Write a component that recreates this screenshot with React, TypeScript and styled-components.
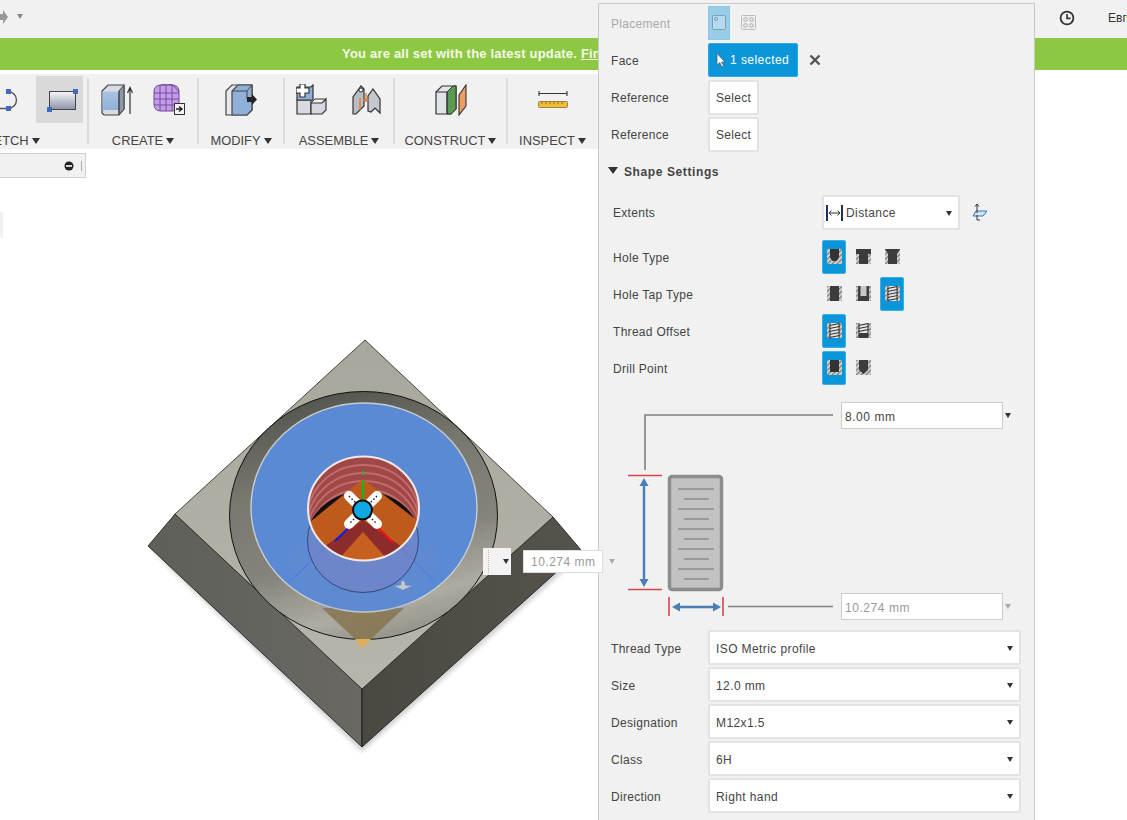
import { useId } from 'react';
import styled, { createGlobalStyle } from 'styled-components';

const GlobalStyle = createGlobalStyle`
	html, body {
		margin: 0;
		padding: 0;
		background: #fff;
		font-family: 'Liberation Sans', Arial, sans-serif;
		font-size: 12px;
		color: #444;
	}
	* {
		box-sizing: border-box;
	}
`;

type HoleVariant =
	| 'simple'
	| 'counterbore'
	| 'countersink'
	| 'plain'
	| 'clearance'
	| 'tapped'
	| 'threadFull'
	| 'threadPartial'
	| 'flat'
	| 'angled';

const HoleIcon = ({ variant }: { variant: HoleVariant }) => {
	const id = useId();
	const threaded = variant === 'tapped' || variant === 'threadFull' || variant === 'threadPartial';
	return (
		<svg width="15" height="15" viewBox="0 0 15 15">
			<defs>
				<pattern id={id} width="3.4" height="3.4" patternUnits="userSpaceOnUse" patternTransform="rotate(45)">
					<rect width="3.4" height="3.4" fill="#d2d2d2" />
					<rect width="1.2" height="3.4" fill="#7c7c7c" />
				</pattern>
			</defs>
			<rect width="15" height="15" fill={`url(#${id})`} />
			{variant === 'simple' && <path d="M3 0H12V8.5L9.5 12H5.5L3 8.5Z" fill="#333" />}
			{variant === 'counterbore' && <path d="M0 0H15V5H12V15H3V5H0Z" fill="#3c3c3c" />}
			{variant === 'countersink' && <path d="M0 0H15L12 5V15H3V5Z" fill="#3c3c3c" />}
			{variant === 'plain' && <rect x="3" width="9" height="15" fill="#3c3c3c" />}
			{variant === 'clearance' && (
				<>
					<rect x="2" width="11" height="15" fill="#3c3c3c" />
					<rect x="4.5" width="6" height="10" fill="#c6c6c6" />
				</>
			)}
			{threaded && (
				<>
					<rect x="3" width="9" height={variant === 'threadPartial' ? 10 : 15} fill="#e8e8e8" />
					{variant === 'threadPartial' && <rect x="3" y="10" width="9" height="5" fill="#3c3c3c" />}
					{[1, 4, 7, 10, 13].slice(0, variant === 'threadPartial' ? 3 : 5).map((y) => (
						<path key={y} d={`M2.5 ${y + 1.5}L12.5 ${y - 0.5}`} stroke="#333" strokeWidth="1.2" />
					))}
					<path d="M3 0V15M12 0V15" stroke="#333" />
				</>
			)}
			{variant === 'flat' && <path d="M3 0H12V12H3Z" fill="#333" />}
			{variant === 'angled' && <path d="M3 0H12V10L7.5 14L3 10Z" fill="#3c3c3c" />}
		</svg>
	);
};

const ArcIcon = () => (
	<svg width="24" height="24" viewBox="0 0 24 24">
		<path d="M-4 20.5H10A8.5 8.5 0 0 0 10 3.5" fill="none" stroke="#555" strokeWidth="1.4" />
		<rect x="8" y="1" width="5" height="5" fill="#3f6cc0" />
		<rect x="8" y="18" width="5" height="5" fill="#3f6cc0" />
	</svg>
);

const RectIcon = () => (
	<svg width="32" height="24" viewBox="0 0 32 24">
		<defs>
			<linearGradient id="sketchFace" x1="0" y1="0" x2="0" y2="1">
				<stop offset="0" stopColor="#f6f7fa" />
				<stop offset="1" stopColor="#8d93a6" />
			</linearGradient>
		</defs>
		<rect x="3.5" y="3.5" width="26" height="18" fill="url(#sketchFace)" stroke="#444" />
		<rect x="27" y="1" width="5" height="5" fill="#3f6cc0" />
		<rect x="1" y="19" width="5" height="5" fill="#3f6cc0" />
	</svg>
);

const ExtrudeIcon = () => (
	<svg width="32" height="32" viewBox="0 0 32 32">
		<defs>
			<linearGradient id="extrudeFace" x1="0" y1="0" x2="0" y2="1">
				<stop offset="0" stopColor="#aac4e4" />
				<stop offset="1" stopColor="#8fb0d8" />
			</linearGradient>
		</defs>
		<path d="M1 7L7 1H23V25L18 31H3L1 29Z" fill="#d7dbe2" stroke="#444" strokeWidth="1.2" />
		<path d="M1.5 7.5H18V26H1.5Z" fill="url(#extrudeFace)" />
		<path d="M18 7L23 1V25L18 31Z" fill="#8b98a8" stroke="#444" />
		<path d="M18 7V31" stroke="#444" />
		<path d="M29 30V5M26.5 9L29 3.5L31.5 9" fill="none" stroke="#333" strokeWidth="1.2" />
	</svg>
);

const FormIcon = () => (
	<svg width="32" height="32" viewBox="0 0 32 32">
		<path d="M1 8Q1 1 8 1H19Q26 1 26 8V20Q26 27 19 27H8Q1 27 1 20Z" fill="#c79be8" stroke="#6a4a96" />
		<path d="M1 9H26M1 15H26M1 21H26M7 1V27M13 1V27M19 1V27" stroke="#6a4a96" strokeWidth="0.9" />
		<path d="M8 1Q14 -1 20 1L26 8" fill="none" stroke="#6a4a96" />
		<rect x="21.5" y="19.5" width="10" height="11" fill="#f4f4f4" stroke="#333" />
		<path d="M23 25H28M26 22.5L29 25L26 27.5" fill="none" stroke="#222" strokeWidth="1.4" />
	</svg>
);

const ModifyIcon = () => (
	<svg width="32" height="32" viewBox="0 0 32 32">
		<path d="M1 7L7 1H27V26L22 31H1Z" fill="#e6e9ee" stroke="#444" strokeWidth="1.2" />
		<path d="M7 7L13 1H27V26L22 31H7Z" fill="#8fb0d8" stroke="#444" strokeWidth="1.2" />
		<path d="M22 7H7M22 7L27 1M22 7V15" fill="none" stroke="#444" />
		<path d="M22 13H27V10L32 15.5L27 21V18H22Z" fill="#222" />
	</svg>
);

const AssembleIcon = () => (
	<svg width="32" height="32" viewBox="0 0 32 32">
		<path d="M1 30V16H15V30Z" fill="#d8dce2" stroke="#333" strokeWidth="1.2" />
		<path d="M15 30V19H26L30 15V26L26 30Z" fill="#d5d9df" stroke="#333" strokeWidth="1.2" />
		<path d="M15 19L19 15H30" fill="none" stroke="#333" />
		<path d="M1 16V3H15L17 1V16H1Z" fill="#8fb0d8" stroke="#333" strokeWidth="1.2" />
		<path d="M4 0H9V4H13V9H9V13H4V9H0V4H4Z" fill="#fff" stroke="#333" strokeWidth="1.2" />
	</svg>
);

const JointIcon = () => (
	<svg width="32" height="32" viewBox="0 0 32 32">
		<path d="M3 30V13L11 2L14 5V22L6 30Z" fill="#b9bec6" stroke="#333" strokeWidth="1.2" />
		<path d="M18 27V12L23 5L30 15V29L25 24L21 28Z" fill="#c3c8cf" stroke="#333" strokeWidth="1.2" />
		<circle cx="11" cy="6" r="2" fill="#fff" stroke="#333" />
		<path d="M10 26V14M16 18V9M13 16H19" stroke="#e07b2a" strokeWidth="1.3" fill="none" />
	</svg>
);

const ConstructIcon = () => (
	<svg width="32" height="32" viewBox="0 0 32 32">
		<path d="M1 8L7 2H21V25L16 30H1Z" fill="#e0e3e8" stroke="#333" strokeWidth="1.2" />
		<path d="M12 8L18 2H21V25L16 30H12Z" fill="#5a9a52" stroke="#333" />
		<path d="M1 8H12V30" fill="none" stroke="#333" />
		<path d="M24 11L31 1V22L24 31Z" fill="#ef9c63" stroke="#333" strokeWidth="1.1" />
	</svg>
);

const InspectIcon = () => (
	<svg width="32" height="18" viewBox="0 0 32 18">
		<path d="M2 2.5H30M2 0V5M30 0V5" stroke="#333" strokeWidth="1.1" fill="none" />
		<rect x="1.5" y="10.5" width="29" height="6" rx="1" fill="#eebd3d" stroke="#a08436" />
		<path d="M5 11V13M9 11V13M13 11V13M17 11V13M21 11V13M25 11V13" stroke="#8a6d1e" />
	</svg>
);

const ModelView = () => (
	<ModelSvg viewBox="0 149 598 671" width="598" height="671">
		<defs>
			<linearGradient id="ringGrad" x1="0.4" y1="0" x2="0.7" y2="1">
				<stop offset="0" stopColor="#565651" />
				<stop offset="0.3" stopColor="#78786f" />
				<stop offset="0.62" stopColor="#85847c" />
				<stop offset="0.84" stopColor="#aeaba1" />
				<stop offset="1" stopColor="#8f8e86" />
			</linearGradient>
			<linearGradient id="topFace" x1="0" y1="0" x2="0" y2="1">
				<stop offset="0" stopColor="#a9a69b" />
				<stop offset="1" stopColor="#b8b5ac" />
			</linearGradient>
			<linearGradient id="rightFace" x1="0" y1="0" x2="1" y2="0">
				<stop offset="0" stopColor="#4a4840" />
				<stop offset="1" stopColor="#55534b" />
			</linearGradient>
			<linearGradient id="leftFace" x1="0" y1="0" x2="1" y2="0">
				<stop offset="0" stopColor="#5f5f59" />
				<stop offset="1" stopColor="#696863" />
			</linearGradient>
			<filter id="soft" x="-10%" y="-10%" width="120%" height="120%">
				<feGaussianBlur stdDeviation="2" />
			</filter>
			<clipPath id="holeClip">
				<ellipse cx="363.5" cy="508.5" rx="55.5" ry="52" />
			</clipPath>
		</defs>

		<path d="M150 550L362 752L585 552L362 700Z" fill="#000" opacity="0.18" filter="url(#soft)" />
		<path d="M148 546L175 514L362 689V747Z" fill="url(#leftFace)" stroke="#111" strokeWidth="0.8" />
		<path d="M362 747V689L553 517L581 550Z" fill="url(#rightFace)" stroke="#111" strokeWidth="0.8" />
		<path d="M365 340L553 517L362 689L175 514Z" fill="url(#topFace)" stroke="#222" strokeWidth="0.8" />

		<ellipse cx="363.5" cy="515.5" rx="134" ry="124" fill="url(#ringGrad)" stroke="#111" strokeWidth="1" />
		<path d="M322 608H404L371 639H355Z" fill="#86744f" opacity="0.85" />
		<path d="M355 639H371L362 648Z" fill="#e4ae58" />
		<ellipse cx="364" cy="507.5" rx="113" ry="104.5" fill="#5a8ad4" stroke="#c9cdd0" strokeWidth="1.4" />

		<path d="M293 545H435V572L403 612H325L293 572Z" fill="#7c8ac0" opacity="0.13" />
		<path d="M325 548L288 583M403 550L435 582" stroke="#4c78dc" strokeWidth="1.6" strokeDasharray="9 2" opacity="0.65" />
		<ellipse cx="363" cy="540.5" rx="55.5" ry="52" fill="#8080c0" fillOpacity="0.45" stroke="#33477c" strokeWidth="1" />

		<g clipPath="url(#holeClip)">
			<rect x="300" y="450" width="130" height="120" fill="#a04848" />
			{[0, 8, 16, 24].map((d) => (
				<ellipse key={d} cx="363.5" cy={517 + d} rx="56" ry="52" fill="none" stroke="#bf6c6a" strokeWidth="1.8" />
			))}
			<ellipse cx="363.5" cy="543" rx="58" ry="52" fill="#141010" />
			<path d="M300 530L363 479L430 530V570H300Z" fill="#bd5a1c" />
			<path d="M318 551L363 520L408 551V570H318Z" fill="#8b2b2b" />
			<path d="M338 560L363 532L388 560V570H338Z" fill="#c7601f" />
		</g>
		<ellipse cx="363.5" cy="508.5" rx="55.5" ry="52" fill="none" stroke="#f3e9e4" strokeWidth="2" />

		<path d="M363 480V502" stroke="#1fb01f" strokeWidth="2.4" />
		<rect x="362" y="471" width="2.6" height="4" fill="#3aa83a" />
		<path d="M357 520L335 541" stroke="#1a1ad8" strokeWidth="2.4" />
		<path d="M370 520L393 543" stroke="#ea1010" strokeWidth="2.4" />
		<path d="M349 496L377 524M377 496L349 524" stroke="#fff" strokeWidth="10" strokeLinecap="round" />
		<path d="M349 496L377 524M377 496L349 524" stroke="#222" strokeWidth="1.4" strokeDasharray="1.6 2" />
		<circle cx="362.5" cy="510" r="9.5" fill="#10a8e2" stroke="#0a0a0a" strokeWidth="2" />

		<path d="M401 581H405V585L412 586L403 590L394 586L401 585Z" fill="#c4cbd6" stroke="#7a8aa8" strokeWidth="0.6" />
	</ModelSvg>
);

const App = () => (
	<Page>
		<GlobalStyle />
		<TopBar>
			<Nav>
				<svg width="8" height="14" viewBox="0 0 8 14">
					<path d="M0 4H3V0L8 7L3 14V10H0Z" fill="#999" />
				</svg>
				<NavCaret />
			</Nav>
			<svg width="16" height="16" viewBox="0 0 16 16">
				<circle cx="8" cy="8" r="6.4" fill="none" stroke="#333" strokeWidth="1.8" />
				<path d="M8 4V8.4H11.5" fill="none" stroke="#333" strokeWidth="1.6" />
			</svg>
			<UserName>Евгений</UserName>
		</TopBar>
		<Banner>
			<BannerText>
				You are all set with the latest update. <BannerLink>Find out what's new</BannerLink>
			</BannerText>
		</Banner>
		<Toolbar>
			<Group $width={158} $clipped>
				<IconRow $justify="flex-end" $gap={14}>
					<ArcIcon />
					<ActiveTool>
						<RectIcon />
					</ActiveTool>
				</IconRow>
				<GroupLabel>
					SKETCH <Caret $large />
				</GroupLabel>
			</Group>
			<Separator />
			<Group $width={108}>
				<IconRow $gap={20}>
					<ExtrudeIcon />
					<FormIcon />
				</IconRow>
				<GroupLabel>
					CREATE <Caret $large />
				</GroupLabel>
			</Group>
			<Separator />
			<Group $width={84}>
				<IconRow>
					<ModifyIcon />
				</IconRow>
				<GroupLabel>
					MODIFY <Caret $large />
				</GroupLabel>
			</Group>
			<Separator />
			<Group $width={108}>
				<IconRow $gap={22}>
					<AssembleIcon />
					<JointIcon />
				</IconRow>
				<GroupLabel>
					ASSEMBLE <Caret $large />
				</GroupLabel>
			</Group>
			<Separator />
			<Group $width={111}>
				<IconRow>
					<ConstructIcon />
				</IconRow>
				<GroupLabel>
					CONSTRUCT <Caret $large />
				</GroupLabel>
			</Group>
			<Separator />
			<Group $width={89}>
				<IconRow>
					<InspectIcon />
				</IconRow>
				<GroupLabel>
					INSPECT <Caret $large />
				</GroupLabel>
			</Group>
		</Toolbar>
		<Viewport>
			<ModelView />
			<BrowserBox>
				<svg width="10" height="10" viewBox="0 0 10 10">
					<circle cx="5" cy="5" r="4.5" fill="#222" />
					<rect x="2" y="4.2" width="6" height="1.6" fill="#fff" />
				</svg>
				<BrowserGrip />
			</BrowserBox>
			<SideChip />
			<DimHandle>
				<DimGrip />
				<Caret />
			</DimHandle>
		</Viewport>
		<Panel>
			<Row>
				<Label $muted>Placement</Label>
				<PlacementActive>
					<svg width="14" height="15" viewBox="0 0 14 15">
						<rect x="0.5" y="0.5" width="13" height="14" rx="1" fill="#b7d9ec" stroke="#7aa0b8" />
						<circle cx="4" cy="4" r="1.6" fill="none" stroke="#7aa0b8" />
					</svg>
				</PlacementActive>
				<PlacementIdle>
					<svg width="15" height="15" viewBox="0 0 15 15">
						<rect x="0.5" y="0.5" width="14" height="14" rx="1" fill="#eee" stroke="#bbb" />
						<circle cx="4.5" cy="4.5" r="1.8" fill="none" stroke="#aaa" />
						<circle cx="10.5" cy="4.5" r="1.8" fill="none" stroke="#aaa" />
						<circle cx="4.5" cy="10.5" r="1.8" fill="none" stroke="#aaa" />
						<circle cx="10.5" cy="10.5" r="1.8" fill="none" stroke="#aaa" />
					</svg>
				</PlacementIdle>
			</Row>
			<Row>
				<Label>Face</Label>
				<SelectedButton>
					<svg width="10" height="15" viewBox="0 0 10 15">
						<path d="M1 0.5V12L3.8 9.6L5.8 14L7.6 13.2L5.6 9H9Z" fill="#fff" stroke="#555" strokeWidth="0.7" />
					</svg>
					1 selected
				</SelectedButton>
				<ClearButton>
					<svg width="12" height="12" viewBox="0 0 12 12">
						<path d="M1.5 1.5L10.5 10.5M10.5 1.5L1.5 10.5" stroke="#555" strokeWidth="2.4" />
					</svg>
				</ClearButton>
			</Row>
			<Row>
				<Label>Reference</Label>
				<SelectButton>Select</SelectButton>
			</Row>
			<Row>
				<Label>Reference</Label>
				<SelectButton>Select</SelectButton>
			</Row>
			<SectionRow>
				<SectionCaret />
				Shape Settings
			</SectionRow>
			<WideRow $top={4}>
				<WideLabel>Extents</WideLabel>
				<Dropdown $width={138}>
					<DropdownValue>
						<svg width="17" height="18" viewBox="0 0 17 18">
							<path d="M1 1V17M16 1V17" stroke="#1d3260" strokeWidth="2" />
							<path d="M3 9H14M5.5 6.5L3 9L5.5 11.5M11.5 6.5L14 9L11.5 11.5" fill="none" stroke="#333" />
						</svg>
						Distance
					</DropdownValue>
					<Caret />
				</Dropdown>
				<FlipButton>
					<svg width="16" height="18" viewBox="0 0 16 18">
						<path d="M4 8H15L11 13H1Z" fill="#cfe4f4" stroke="#2f78b8" />
						<path d="M5 10V1.5M3 3.5L5 1L7 3.5M5 12V17H8" fill="none" stroke="#333" />
					</svg>
				</FlipButton>
			</WideRow>
			<WideRow $top={8}>
				<WideLabel>Hole Type</WideLabel>
				<IconToggle $active>
					<HoleIcon variant="simple" />
				</IconToggle>
				<IconToggle>
					<HoleIcon variant="counterbore" />
				</IconToggle>
				<IconToggle>
					<HoleIcon variant="countersink" />
				</IconToggle>
			</WideRow>
			<WideRow>
				<WideLabel>Hole Tap Type</WideLabel>
				<IconToggle>
					<HoleIcon variant="plain" />
				</IconToggle>
				<IconToggle>
					<HoleIcon variant="clearance" />
				</IconToggle>
				<IconToggle $active>
					<HoleIcon variant="tapped" />
				</IconToggle>
			</WideRow>
			<WideRow>
				<WideLabel>Thread Offset</WideLabel>
				<IconToggle $active>
					<HoleIcon variant="threadFull" />
				</IconToggle>
				<IconToggle>
					<HoleIcon variant="threadPartial" />
				</IconToggle>
			</WideRow>
			<WideRow>
				<WideLabel>Drill Point</WideLabel>
				<IconToggle $active>
					<HoleIcon variant="flat" />
				</IconToggle>
				<IconToggle>
					<HoleIcon variant="angled" />
				</IconToggle>
			</WideRow>
			<Diagram>
				<svg width="242" height="218" viewBox="599 402 242 218">
					<path d="M833 415H645V470" fill="none" stroke="#808080" strokeWidth="1.6" />
					<path d="M628 475.5H662M628 589.5H662" stroke="#d9454f" strokeWidth="1.6" />
					<path d="M644 483V584" stroke="#4a7fb5" strokeWidth="2.4" />
					<path d="M644 478L639.5 486H648.5ZM644 587L639.5 579H648.5Z" fill="#4a7fb5" />
					<rect x="669.5" y="476.5" width="52" height="113" rx="2.5" fill="#c2c2c2" stroke="#8c8c8c" strokeWidth="3.4" />
					{[489, 509, 529, 549, 569].map((y) => (
						<path key={y} d={`M678 ${y}H714M684 ${y + 10}H709`} stroke="#999" strokeWidth="2" />
					))}
					<path d="M669 597V616M723 597V616" stroke="#d9454f" strokeWidth="1.6" />
					<path d="M676 607H717" stroke="#4a7fb5" strokeWidth="2.4" />
					<path d="M672 607L680 602.5V611.5ZM721 607L713 602.5V611.5Z" fill="#4a7fb5" />
					<path d="M728 606.5H833" stroke="#808080" strokeWidth="1.6" />
				</svg>
				<DiagramInputs>
					<DiagramField>
						<FieldBox>8.00 mm</FieldBox>
						<Caret />
					</DiagramField>
					<DiagramField>
						<FieldBox $muted>10.274 mm</FieldBox>
						<Caret $muted />
					</DiagramField>
				</DiagramInputs>
			</Diagram>
			<ThreadRows>
				{[
					['Thread Type', 'ISO Metric profile'],
					['Size', '12.0 mm'],
					['Designation', 'M12x1.5'],
					['Class', '6H'],
					['Direction', 'Right hand'],
				].map(([label, value]) => (
					<Row key={label}>
						<Label $low>{label}</Label>
						<Dropdown $width={313} $low>
							{value}
							<Caret />
						</Dropdown>
					</Row>
				))}
			</ThreadRows>
		</Panel>
		<DimInput>10.274 mm</DimInput>
		<DimCaret>
			<Caret $muted />
		</DimCaret>
	</Page>
);

const Page = styled.div`
	position: relative;
	width: 1127px;
	height: 820px;
	overflow: hidden;
	background: #fff;
	display: flex;
	flex-direction: column;
`;

const TopBar = styled.div`
	height: 38px;
	flex: none;
	background: #f1f1f1;
	display: grid;
	grid-template-columns: 1059px 49px 1fr;
	align-items: center;
	padding-bottom: 2px;
`;

const Nav = styled.div`
	display: flex;
	align-items: center;
	gap: 9px;
	height: 24px;
	padding-bottom: 3px;
`;

const NavCaret = styled.span`
	width: 0;
	height: 0;
	border-left: 3.5px solid transparent;
	border-right: 3.5px solid transparent;
	border-top: 5px solid #888;
`;

const UserName = styled.span`
	grid-column: 3;
	white-space: nowrap;
	color: #333;
`;

const Banner = styled.div`
	height: 32px;
	flex: none;
	background: #8dc843;
	padding-left: 342px;
`;

const BannerText = styled.div`
	width: 256px;
	color: #f4f9ea;
	font-size: 13px;
	font-weight: 700;
	letter-spacing: 0.2px;
	line-height: 32px;
	white-space: nowrap;
	overflow: hidden;
`;

const BannerLink = styled.span`
	text-decoration: underline;
`;

const Toolbar = styled.div`
	width: 598px;
	height: 75px;
	flex: none;
	margin-top: 4px;
	background: #f1f1f1;
	display: flex;
	overflow: hidden;
`;

const Group = styled.div<{ $width: number; $clipped?: boolean }>`
	flex: none;
	width: ${(props) => props.$width}px;
	margin-left: ${(props) => (props.$clipped ? '-71px' : '0')};
	display: flex;
	flex-direction: column;
	align-items: center;
`;

const IconRow = styled.div<{ $justify?: string; $gap?: number }>`
	align-self: stretch;
	height: 47px;
	margin-top: 2px;
	display: flex;
	align-items: center;
	justify-content: ${(props) => props.$justify ?? 'center'};
	gap: ${(props) => props.$gap ?? 0}px;
	padding-right: ${(props) => (props.$justify ? '4px' : '0')};
`;

const ActiveTool = styled.div`
	width: 47px;
	height: 47px;
	background: #d9d9d9;
	display: flex;
	align-items: center;
	justify-content: center;
	padding-left: 4px;
`;

const GroupLabel = styled.div`
	margin-top: 10px;
	height: 16px;
	line-height: 16px;
	font-size: 12.9px;
	color: #444;
	white-space: nowrap;
	display: flex;
	align-items: center;
	gap: 3px;
`;

const Caret = styled.span<{ $muted?: boolean; $large?: boolean }>`
	display: inline-block;
	flex: none;
	width: 0;
	height: 0;
	border-left: ${(props) => (props.$large ? 4 : 3.5)}px solid transparent;
	border-right: ${(props) => (props.$large ? 4 : 3.5)}px solid transparent;
	border-top: ${(props) => (props.$large ? 6 : 5)}px solid ${(props) => (props.$muted ? '#aaa' : '#333')};
`;

const Separator = styled.div`
	flex: none;
	width: 2px;
	margin: 4px 0 5px;
	background: #dcdcdc;
`;

const Viewport = styled.div`
	position: relative;
	flex: 1;
`;

const ModelSvg = styled.svg`
	display: block;
`;

const BrowserBox = styled.div`
	position: absolute;
	left: 0;
	top: 4px;
	width: 86px;
	height: 25px;
	background: #f1f1f1;
	border: 1px solid #cfcfcf;
	border-left: none;
	display: flex;
	align-items: center;
	justify-content: flex-end;
	padding-right: 2px;
	gap: 7px;
`;

const BrowserGrip = styled.span`
	width: 2px;
	height: 10px;
	border-left: 1px solid #aaa;
`;

const SideChip = styled.div`
	position: absolute;
	left: 0;
	top: 63px;
	width: 3px;
	height: 26px;
	background: #f1f1f1;
`;

const DimHandle = styled.div`
	position: absolute;
	left: 483px;
	top: 399px;
	width: 28px;
	height: 27px;
	background: #f3f3f3;
	display: flex;
	align-items: center;
	justify-content: space-between;
	padding: 0 2px 0 5px;
`;

const DimGrip = styled.span`
	width: 2px;
	height: 23px;
	border-left: 1px dotted #bbb;
`;

const DimInput = styled.div`
	position: absolute;
	left: 523px;
	top: 550px;
	width: 80px;
	height: 23px;
	background: #fff;
	border: 1px solid #ddd;
	color: #999;
	letter-spacing: 0.5px;
	line-height: 22px;
	padding-left: 7px;
	white-space: nowrap;
`;

const DimCaret = styled.div`
	position: absolute;
	left: 609px;
	top: 559px;
	line-height: 0;
`;

const Panel = styled.div`
	position: absolute;
	left: 598px;
	top: 3px;
	width: 437px;
	height: 817px;
	background: #f1f1f1;
	border: 1px solid #c8c8c8;
	border-bottom: none;
	display: flex;
	flex-direction: column;
	letter-spacing: 0.3px;
`;

const Row = styled.div`
	flex: none;
	height: 37px;
	padding: 2px 0 1px 12px;
	display: flex;
	align-items: center;
`;

const Label = styled.div<{ $muted?: boolean; $low?: boolean }>`
	flex: none;
	width: 97px;
	padding-top: ${(props) => (props.$low ? 3 : 1)}px;
	color: ${(props) => (props.$muted ? '#aaa' : '#444')};
`;

const PlacementActive = styled.div`
	width: 22px;
	height: 34px;
	background: #97cde9;
	border: 1px solid #8ac6e6;
	display: flex;
	align-items: center;
	justify-content: center;
	padding-bottom: 2px;
`;

const PlacementIdle = styled.div`
	width: 36px;
	display: flex;
	justify-content: center;
	padding-bottom: 2px;
`;

const SelectedButton = styled.div`
	width: 90px;
	height: 34px;
	background: #0b96d9;
	border: 1px solid #2aa6e0;
	border-radius: 2px;
	color: #fff;
	display: flex;
	align-items: center;
	gap: 4px;
	padding-left: 7px;
	letter-spacing: 0.45px;
	line-height: 36px;
`;

const ClearButton = styled.div`
	margin-left: 11px;
	line-height: 0;
`;

const SelectButton = styled.div`
	width: 51px;
	height: 35px;
	background: #fff;
	border: 2px solid #e3e3e3;
	border-radius: 2px;
	line-height: 33px;
	text-align: center;
`;

const SectionRow = styled.div`
	flex: none;
	height: 37px;
	padding: 3px 0 0 9px;
	display: flex;
	align-items: center;
	gap: 6px;
	font-weight: 700;
	letter-spacing: 0.6px;
`;

const SectionCaret = styled.span`
	width: 0;
	height: 0;
	border-left: 5px solid transparent;
	border-right: 5px solid transparent;
	border-top: 7px solid #333;
	margin-bottom: 3px;
`;

const WideRow = styled.div<{ $top?: number }>`
	flex: none;
	height: 37px;
	margin-top: ${(props) => props.$top ?? 0}px;
	padding: 2px 0 1px 14px;
	display: flex;
	align-items: center;
`;

const WideLabel = styled.div`
	flex: none;
	width: 209px;
	padding-top: 1px;
`;

const Dropdown = styled.div<{ $width: number; $low?: boolean }>`
	flex: none;
	width: ${(props) => props.$width}px;
	height: 35px;
	background: #fff;
	border: 2px solid #e3e3e3;
	border-radius: 2px;
	display: flex;
	align-items: center;
	justify-content: space-between;
	padding: ${(props) => (props.$low ? 3 : 2)}px 6px 0 6px;
	letter-spacing: 0.4px;
`;

const DropdownValue = styled.div`
	display: flex;
	align-items: center;
	gap: 3px;
	margin-left: -4px;
`;

const FlipButton = styled.div`
	margin-left: 12px;
	line-height: 0;
`;

const IconToggle = styled.div<{ $active?: boolean }>`
	flex: none;
	width: 24px;
	height: 34px;
	margin-right: 5px;
	background: ${(props) => (props.$active ? '#0b96d9' : 'transparent')};
	border: 1px solid ${(props) => (props.$active ? '#3aaee6' : 'transparent')};
	border-radius: 2px;
	display: flex;
	align-items: center;
	justify-content: center;
	padding-bottom: 2px;
`;

const Diagram = styled.div`
	flex: none;
	height: 218px;
	margin-top: 16px;
	display: flex;
`;

const DiagramInputs = styled.div`
	display: flex;
	flex-direction: column;
	justify-content: space-between;
`;

const DiagramField = styled.div`
	display: flex;
	align-items: center;
	gap: 2px;
`;

const FieldBox = styled.div<{ $muted?: boolean }>`
	width: 162px;
	height: 27px;
	background: #fff;
	border: 1px solid #ccc;
	color: ${(props) => (props.$muted ? '#999' : '#444')};
	letter-spacing: 0.55px;
	line-height: 28px;
	padding-left: 3px;
`;

const ThreadRows = styled.div`
	margin-top: 8px;
	display: flex;
	flex-direction: column;
`;

export default App;
